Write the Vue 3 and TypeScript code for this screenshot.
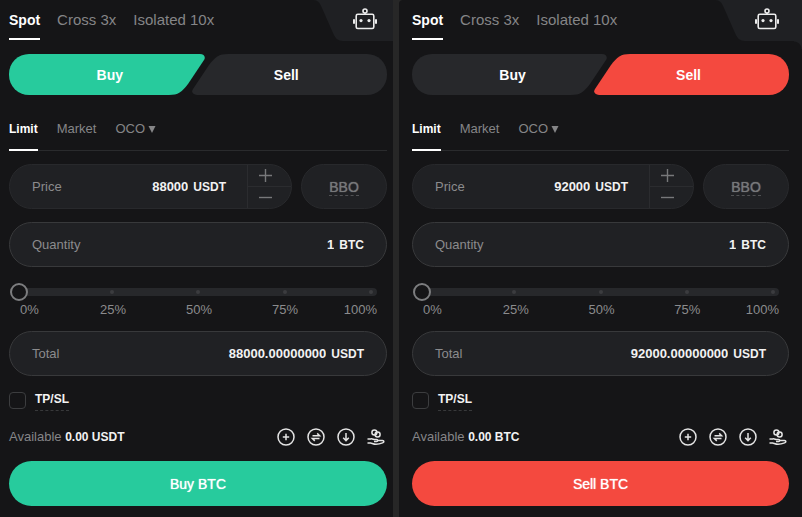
<script setup lang="ts">
import { reactive } from 'vue'

interface Ticket {
  side: 'buy' | 'sell'
  price: string
  quantity: string
  total: string
  percent: number
  bracket: boolean
  available: string
  submit: string
}

const tickets = reactive<Ticket[]>([
  {
    side: 'buy',
    price: '88000',
    quantity: '1',
    total: '88000.00000000',
    percent: 0,
    bracket: false,
    available: '0.00 USDT',
    submit: 'Buy BTC',
  },
  {
    side: 'sell',
    price: '92000',
    quantity: '1',
    total: '92000.00000000',
    percent: 0,
    bracket: false,
    available: '0.00 BTC',
    submit: 'Sell BTC',
  },
])

function step(ticket: Ticket, delta: number): void {
  ticket.price = String(Math.max(0, Number(ticket.price) + delta))
}
</script>

<template>
  <main class="board">
    <form v-for="t in tickets" :key="t.side" class="panel" :class="t.side" @submit.prevent>
      <header class="top">
        <nav class="tabs modes">
          <a href="#spot" class="active">Spot</a>
          <a href="#cross">Cross 3x</a>
          <a href="#isolated">Isolated 10x</a>
        </nav>
        <button type="button" class="bot" aria-label="Trading bot">
          <svg class="bot-edge" width="30" height="41" viewBox="0 0 30 41">
            <path d="M0 0C5 0 7 3 9 8L20 33C22 38 25 41 30 41V0Z" fill="#1f2023" />
          </svg>
          <span class="bot-face">
            <svg width="24" height="22" viewBox="0 0 24 22" fill="none" stroke="#ececec">
              <circle cx="12" cy="3" r="2" stroke-width="1.6" />
              <path d="M12 5v2" stroke-width="1.6" />
              <rect x="3.2" y="6.3" width="17.6" height="14.2" rx="1.6" stroke-width="1.6" />
              <path d="M1 11.3v4.400M23 11.3v4.400" stroke-width="2" />
              <circle cx="8" cy="12.6" r="1.600" fill="#ececec" stroke="none" />
              <circle cx="16" cy="12.6" r="1.600" fill="#ececec" stroke="none" />
            </svg>
          </span>
        </button>
      </header>

      <div class="body">
        <div class="sides">
          <button type="button" class="side side-buy" :class="{ on: t.side === 'buy' }">
            <span class="fill"></span>
            <svg class="edge" width="60" height="41" viewBox="0 0 60 41">
              <path d="M0 0H55C59 0 61 3 59 6L43 30C37 38 33 41 24 41H0Z" fill="currentColor" />
            </svg>
            <span class="label">Buy</span>
          </button>
          <button type="button" class="side side-sell" :class="{ on: t.side === 'sell' }">
            <span class="fill"></span>
            <svg class="edge" width="60" height="41" viewBox="0 0 60 41">
              <path d="M60 41H5C1 41 -1 38 1 35L17 11C23 3 27 0 36 0H60Z" fill="currentColor" />
            </svg>
            <span class="label">Sell</span>
          </button>
        </div>

        <nav class="tabs kinds">
          <a href="#limit" class="active">Limit</a>
          <a href="#market">Market</a>
          <a href="#oco">OCO
            <svg width="8" height="9" viewBox="0 0 8 9"><path d="M.5 2H7.500L4 9Z" fill="currentColor" /></svg>
          </a>
        </nav>

        <div class="price-row">
          <div class="field price">
            <label :for="t.side + '-price'">Price</label>
            <input :id="t.side + '-price'" v-model="t.price" type="text" />
            <span class="unit">USDT</span>
            <span class="steps">
              <button type="button" aria-label="Increase price" @click="step(t, 1)">
                <svg width="13" height="13" viewBox="0 0 13 13"><path d="M6.500 0V13M0 6.500H13" /></svg>
              </button>
              <button type="button" aria-label="Decrease price" @click="step(t, -1)">
                <svg width="13" height="13" viewBox="0 0 13 13"><path d="M0 6.500H13" /></svg>
              </button>
            </span>
          </div>
          <button type="button" class="bbo"><span>BBO</span></button>
        </div>

        <div class="field strong quantity">
          <label :for="t.side + '-quantity'">Quantity</label>
          <input :id="t.side + '-quantity'" v-model="t.quantity" type="text" />
          <span class="unit">BTC</span>
        </div>

        <div class="slider">
          <span class="track"><i></i><i></i><i></i><i></i><i></i></span>
          <input v-model="t.percent" type="range" min="0" max="100" aria-label="Share of balance" />
        </div>
        <div class="scale">
          <span>0%</span><span>25%</span><span>50%</span><span>75%</span><span class="last">100%</span>
        </div>

        <div class="field strong">
          <label :for="t.side + '-total'">Total</label>
          <input :id="t.side + '-total'" v-model="t.total" type="text" />
          <span class="unit">USDT</span>
        </div>

        <label class="bracket">
          <input v-model="t.bracket" type="checkbox" />
          <span>TP/SL</span>
        </label>

        <div class="funds">
          <p>Available <b>{{ t.available }}</b></p>
          <div class="actions">
            <button type="button" aria-label="Deposit">
              <svg width="18" height="18" viewBox="0 0 18 18">
                <circle cx="9" cy="9" r="8" />
                <path d="M9 5.800V12.200M5.800 9H12.200" />
              </svg>
            </button>
            <button type="button" aria-label="Convert">
              <svg width="18" height="18" viewBox="0 0 18 18">
                <circle cx="9" cy="9" r="8" />
                <path d="M5.500 7.800H12.600L10.200 5.400M12.500 10.500H5.400L7.800 12.900" />
              </svg>
            </button>
            <button type="button" aria-label="Transfer">
              <svg width="18" height="18" viewBox="0 0 18 18">
                <circle cx="9" cy="9" r="8" />
                <path d="M9 5V12.500M6.200 9.800L9 12.600L11.800 9.800" />
              </svg>
            </button>
            <button type="button" aria-label="Borrow">
              <svg width="18" height="18" viewBox="0 0 18 18">
                <circle cx="7.400" cy="4.400" r="2.500" />
                <circle cx="10.600" cy="6.400" r="2.500" />
                <path d="M.5 11H3.600C5.200 10.400 6.400 11.600 8 11.600H9.500C11.200 11.600 11.200 13.600 9.500 13.600H7M11.200 12.600H15.500C17.300 12.600 17.300 14.400 15.600 14.900C13 15.900 11.500 16.300 9 16.300C6.500 16.300 5 15.200 3.600 15H.5" />
              </svg>
            </button>
          </div>
        </div>

        <button type="submit" class="submit">{{ t.submit }}</button>
      </div>
    </form>
  </main>
</template>

<style>
body {
  margin: 0;
  background: #151517;
}
</style>

<style scoped>
.board,
.board * {
  box-sizing: border-box;
}
.board {
  display: grid;
  grid-template-columns: 393fr 403fr;
  gap: 6px;
  min-height: 100vh;
  background: #272727;
  color: #f2f2f2;
  font: 13px/16px "Liberation Sans", Arial, sans-serif;
}
button,
input {
  margin: 0;
  padding: 0;
  border: 0;
  background: none;
  color: inherit;
  font: inherit;
}
a {
  color: inherit;
  text-decoration: none;
}
svg {
  display: block;
}
.panel {
  min-width: 0;
  background: #151517;
}
.buy {
  --accent: #27cb9d;
  --left: 9px;
  --right: 6px;
}
.sell {
  --accent: #f4493f;
  --left: 13px;
  --right: 13px;
  border-top-left-radius: 4px;
}
.top {
  display: flex;
  justify-content: space-between;
  height: 41px;
  padding-left: var(--left);
}
.tabs {
  display: flex;
  color: #858587;
}
.tabs a {
  border-bottom: 2px solid transparent;
  white-space: nowrap;
}
.tabs .active {
  border-color: #fff;
  color: #fff;
  font-weight: 700;
}
.modes {
  gap: 17px;
  height: 40px;
  font-size: 15px;
  line-height: 40px;
}
.modes .active {
  font-size: 14px;
}
.bot {
  display: flex;
}
.bot-face {
  height: 41px;
  padding: 8px calc(var(--right) + 10px) 0 10px;
  background: #1f2023;
}
.body {
  padding: 13px var(--right) 11px var(--left);
}
.sell .body {
  background: radial-gradient(circle at 0 100%, transparent 7px, #1f2023 8px) top right / 8px 8px no-repeat;
}
.sides {
  display: flex;
}
.side {
  display: grid;
  flex: 1;
  grid-template-columns: 1fr 60px;
  height: 41px;
  color: #27282b;
  font-size: 14px;
  font-weight: 700;
}
.side-sell {
  grid-template-columns: 60px 1fr;
  margin-left: -13px;
}
.side.on {
  color: var(--accent);
}
.side > * {
  grid-row: 1;
}
.fill {
  grid-column: 1;
  height: 41px;
  border-radius: 20px 0 0 20px;
  background: currentColor;
}
.edge {
  grid-column: 2;
}
.side-sell .fill {
  grid-column: 2;
  border-radius: 0 20px 20px 0;
}
.side-sell .edge {
  grid-column: 1;
}
.label {
  grid-column: 1 / 3;
  align-self: center;
  padding-left: 6px;
  color: #fff;
}
.side-sell .label {
  padding: 0 6px 0 0;
}
.kinds {
  gap: 19px;
  height: 43px;
  margin-top: 13px;
  border-bottom: 1px solid #2a2b2d;
}
.kinds a {
  display: flex;
  align-items: center;
  gap: 3px;
  height: 43px;
}
.kinds .active {
  font-size: 12px;
}
.price-row {
  display: flex;
  gap: 9px;
  margin: 13px 0;
}
.field {
  display: flex;
  align-items: center;
  height: 45px;
  padding: 0 22px;
  border: 1px solid #28292c;
  border-radius: 23px;
  background: #202124;
}
.field.strong {
  border-color: #38393b;
}
.field label {
  color: #8b8b8d;
}
.field input {
  flex: 1;
  width: 0;
  min-width: 0;
  font-weight: 700;
  text-align: right;
}
.unit {
  margin-left: 5px;
  font-size: 12px;
  font-weight: 700;
}
.price {
  flex: 1;
  min-width: 0;
  padding-right: 0;
}
.steps {
  display: flex;
  flex-direction: column;
  width: 44px;
  height: 43px;
  margin-left: 21px;
  border-left: 1px solid #2b2c2f;
}
.steps button {
  flex: 1;
  padding-left: 11px;
}
.steps button + button {
  border-top: 1px solid #2b2c2f;
}
.steps path {
  stroke: #77787a;
  stroke-width: 1.4;
}
.bbo {
  width: 86px;
  height: 45px;
  border: 1px solid #28292c;
  border-radius: 23px;
  background: #202124;
  color: #77787a;
  font-size: 14px;
  text-shadow: 0 0 1px currentColor;
}
.bbo span {
  border-bottom: 1px dashed #505153;
}
.slider {
  display: grid;
  align-items: center;
  height: 18px;
  margin: 16px 10px 0 1px;
}
.slider > * {
  grid-area: 1 / 1;
}
.track {
  display: flex;
  align-items: center;
  justify-content: space-between;
  height: 8px;
  margin-left: 9px;
  padding: 0 4px;
  border-radius: 4px;
  background: #27282b;
}
.track i {
  width: 4px;
  height: 4px;
  border-radius: 50%;
  background: #3b3c3f;
}
.slider input {
  width: 100%;
  height: 18px;
  appearance: none;
}
.slider input::-webkit-slider-thumb {
  width: 18px;
  height: 18px;
  border: 2px solid #7c7d7f;
  border-radius: 50%;
  background: #151517;
  appearance: none;
}
.scale {
  display: grid;
  grid-template-columns: 80fr 86fr 86fr 70fr 35fr;
  margin: 1px 10px 13px 11px;
  color: #8b8b8d;
}
.last {
  justify-self: end;
}
.bracket {
  display: flex;
  align-items: center;
  gap: 9px;
  width: max-content;
  height: 19px;
  margin-top: 15px;
  font-size: 12px;
  font-weight: 700;
}
.bracket input {
  width: 17px;
  height: 17px;
  border: 1px solid #3c3d3f;
  border-radius: 4px;
  appearance: none;
}
.bracket span {
  height: 20px;
  border-bottom: 1px dashed #38393b;
}
.funds {
  display: flex;
  align-items: center;
  justify-content: space-between;
  height: 18px;
  margin: 18px 0 15px;
}
.funds p {
  margin: 0;
  color: #858587;
}
.funds b {
  color: #f2f2f2;
  font-size: 12px;
  font-weight: 700;
}
.actions {
  display: flex;
  gap: 12px;
  margin-right: 2px;
}
.actions svg {
  fill: none;
  stroke: #e4e4e4;
  stroke-width: 1.5;
}
.submit {
  width: 100%;
  height: 45px;
  border-radius: 23px;
  background: var(--accent);
  color: #fff;
  font-size: 14px;
  text-shadow: 0 0 1px #fff;
}
</style>
